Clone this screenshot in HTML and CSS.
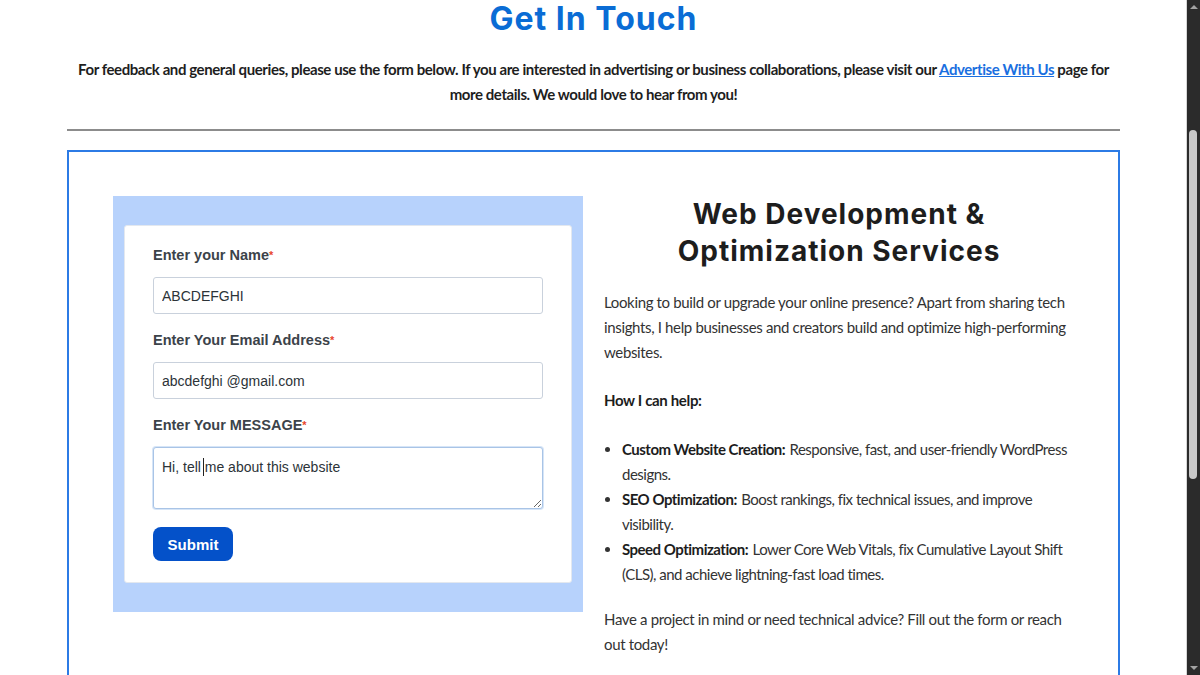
FILE: index.html
```html
<!DOCTYPE html>
<html lang="en">
<head>
    <meta charset="UTF-8">
    <meta name="viewport" content="width=device-width, initial-scale=1.0">
    <title>Get In Touch</title>
    <link rel="stylesheet" href="styles.css">
</head>
<body>
    <div class="page">
        <h1 class="title">Get In Touch</h1>
        <p class="intro">For feedback and general queries, please use the form below. If you are interested in advertising or business collaborations, please visit our <a href="#">Advertise With Us</a> page for more details. We would love to hear from you!</p>
        <hr class="divider">

        <!-- Contact box -->
        <section class="contact-box">
            <div class="form-wrap">
                <form class="form-card" onsubmit="return false">
                    <label class="field-label" for="name">Enter your Name<span class="req">*</span></label>
                    <input id="name" class="field-input" type="text" value="ABCDEFGHI">

                    <label class="field-label" for="email">Enter Your Email Address<span class="req">*</span></label>
                    <input id="email" class="field-input" type="text" value="abcdefghi @gmail.com">

                    <label class="field-label" for="message">Enter Your MESSAGE<span class="req">*</span></label>
                    <div class="textarea-wrap">
                        <textarea id="message" class="field-input field-message">Hi, tell me about this website</textarea>
                        <span class="cursor"></span>
                    </div>

                    <button class="submit-btn" type="submit">Submit</button>
                </form>
            </div>

            <div class="services">
                <h2>Web Development &amp; Optimization Services</h2>
                <p>Looking to build or upgrade your online presence? Apart from sharing tech insights, I help businesses and creators build and optimize high-performing websites.</p>
                <p><strong>How I can help:</strong></p>
                <ul>
                    <li><strong>Custom Website Creation:</strong> Responsive, fast, and user-friendly WordPress designs.</li>
                    <li><strong>SEO Optimization:</strong> Boost rankings, fix technical issues, and improve visibility.</li>
                    <li><strong>Speed Optimization:</strong> Lower Core Web Vitals, fix Cumulative Layout Shift (CLS), and achieve lightning-fast load times.</li>
                </ul>
                <p>Have a project in mind or need technical advice? Fill out the form or reach out today!</p>
            </div>
        </section>
    </div>

    <!-- Scrollbar -->
    <div class="scrollbar">
        <span class="arrow up"></span>
        <span class="thumb"></span>
        <span class="arrow down"></span>
    </div>
</body>
</html>
```

FILE: styles.css
```css
* { margin: 0; padding: 0; box-sizing: border-box; }
html, body { overflow: hidden; height: 100%; }
body {
    font-family: Lato, "Liberation Sans", sans-serif;
    background: #fff;
    color: #333;
}
.page { width: 1187px; padding: 0 67px; }

/* Header */
.title {
    font-family: Inter, "DejaVu Sans", sans-serif;
    font-weight: 700;
    font-size: 32px;
    letter-spacing: 1px;
    line-height: 38px;
    color: #0a6cd5;
    text-align: center;
}
.intro {
    margin-top: 19px;
    font-size: 15px;
    font-weight: 700;
    letter-spacing: -0.42px;
    line-height: 25px;
    color: #1e1e1e;
    text-align: center;
}
.intro a { color: #1a6fe0; }
.divider { border: none; border-top: 2px solid #8c8c8c; margin-top: 22px; }

/* Contact box */
.contact-box {
    margin-top: 19px;
    border: 2px solid #2c7be5;
    padding: 44px 44px 0;
    display: grid;
    grid-template-columns: 470px 470px;
    column-gap: 21px;
    align-items: start;
    height: 600px;
}
.form-wrap { background: #b7d2fc; padding: 29px 11px; }
.form-card {
    background: #fff;
    border: 1px solid #e3e8ef;
    border-radius: 3px;
    padding: 19px 28px 21px;
    display: flex;
    flex-direction: column;
    align-items: flex-start;
    font-family: "Liberation Sans", Arial, sans-serif;
}
.field-label { font-size: 14.5px; font-weight: 700; line-height: 20px; color: #3c434a; margin-bottom: 12px; }
.req { color: #e8452c; font-size: 11px; vertical-align: top; }
.field-input {
    width: 390px;
    height: 37px;
    border: 1px solid #c9d1dc;
    border-radius: 3px;
    padding: 0 8px;
    font-family: "Liberation Sans", Arial, sans-serif;
    font-size: 14px;
    color: #2c3338;
    margin-bottom: 16px;
    background: #fff;
}
.textarea-wrap { position: relative; margin-bottom: 18px; }
.field-message {
    display: block;
    height: 62px;
    padding: 10px 8px 8px;
    margin: 0;
    resize: vertical;
    border-color: #a9c4e6;
    box-shadow: 0 0 0 1px #d6e5f7;
    line-height: 18px;
}
.cursor { position: absolute; left: 50px; top: 11px; width: 1px; height: 18px; background: #222; }
.submit-btn {
    width: 80px;
    height: 34px;
    border: none;
    border-radius: 8px;
    background: #0451c9;
    color: #fff;
    font-family: "Liberation Sans", Arial, sans-serif;
    font-size: 15px;
    font-weight: 700;
    cursor: pointer;
}

/* Services */
.services { color: #333; font-size: 15px; letter-spacing: -0.35px; line-height: 25px; }
.services h2 {
    font-family: Inter, "DejaVu Sans", sans-serif;
    font-weight: 700;
    font-size: 28px;
    letter-spacing: 1px;
    line-height: 37px;
    color: #1d1d1d;
    text-align: center;
    padding: 0 40px;
    margin-bottom: 20px;
}
.services p { margin-bottom: 23px; }
.services strong { color: #1d1d1d; }
.services ul { padding-left: 18px; margin-bottom: 21px; }
.services li { letter-spacing: -0.5px; padding-top: 1px; margin-bottom: -1px; }
.services li strong { margin-right: 1px; }

/* Scrollbar */
.scrollbar {
    position: fixed;
    top: 0;
    right: 0;
    width: 14px;
    height: 100%;
    background: #2b2b2b;
    border-left: 1px solid #d6d6d6;
}
.thumb { position: absolute; left: 2px; top: 130px; width: 8px; height: 349px; background: #c9c9c9; border-radius: 4px; }
.arrow { position: absolute; left: 3px; width: 0; height: 0; border-left: 4px solid transparent; border-right: 4px solid transparent; }
.arrow.up { top: 5px; border-bottom: 4px solid #a3a3a3; }
.arrow.down { bottom: 5px; border-top: 4px solid #a3a3a3; }
```
